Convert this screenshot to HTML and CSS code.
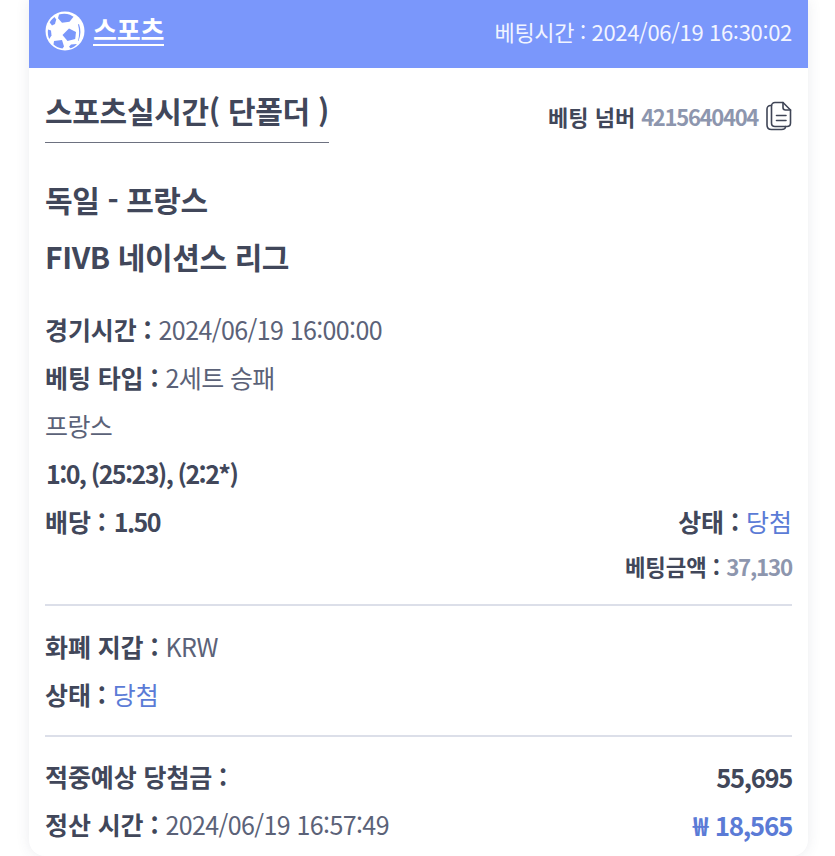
FILE: index.html
```html
<!DOCTYPE html>
<html lang="ko">
<head>
  <meta charset="UTF-8">
  <title>베팅 상세</title>
  <link rel="stylesheet" href="styles.css">
</head>
<body>
  <div class="card">
    <div class="card-head">
      <div class="sport">
        <svg class="ball" viewBox="0 0 40 40" width="40" height="40">
          <circle cx="20" cy="20" r="19.500" fill="#fff"/>
          <g fill="#7a97fb">
            <path d="M14 3.500c3.500-1 7.500-1 11 .2l3.500 2-4 5-7.500 1-4-4.500z"/>
            <path d="M9.500 6c-2 1.500-3.500 3-4.800 5.500l2.300 3 3-1.500 1.200-4.500z"/>
            <path d="M24 17.500l7 3.500-.8 7-7.700 2-5-6z"/>
            <path d="M3 18.500c-.5 3.500 0 6.500 1.200 9.500l2.300-3.500-.5-5z"/>
            <path d="M9 30l8-1 2 6.500-1.500 2c-3.500-.4-6.500-1.700-9-4z"/>
            <path d="M34 13c2 5.500 2 11-.5 17l-.5 0c1.500-6 1.500-11 0-16.500z"/>
            <path d="M26 33.500l6-.5c-1.500 2-3.500 3.200-6.500 4.300l-1.500-1.500z"/>
          </g>
        </svg>
        <span class="sport-name">스포츠</span>
      </div>
      <div class="bet-time">베팅시간 : 2024/06/19 16:30:02</div>
    </div>

    <div class="card-body">
      <div class="title-row">
        <h2 class="bet-title">스포츠실시간( 단폴더 )</h2>
        <div class="bet-no">
          <b>베팅 넘버</b>
          <span class="muted">4215640404</span>
          <svg class="copy" viewBox="0 0 26 30" width="26" height="30" fill="none" stroke="#3f4556" stroke-width="1.600" stroke-linejoin="round" stroke-linecap="round">
            <path d="M5.500 4.500H4.500C2.500 4.500 1 6 1 8v16c0 2.500 1.500 4.500 4.500 4.500h10c2.500 0 4-1.300 4-3"/>
            <path d="M5.500 5C5.500 3 7 1.500 9 1.500h8l7.500 7.500v13c0 2-1.500 3.500-3.500 3.500H9c-2 0-3.500-1.500-3.500-3.500z"/>
            <path d="M17 1.500V6.500c0 1.500 1 2.500 2.500 2.500h5"/>
            <path d="M10.500 14.500h9.500M10.500 19.500h9.500"/>
          </svg>
        </div>
      </div>

      <div class="match">
        <div class="match-line">독일 - 프랑스</div>
        <div class="match-line">FIVB 네이션스 리그</div>
      </div>

      <div class="rows">
        <div class="row"><span><b>경기시간 :</b> <span class="val">2024/06/19 16:00:00</span></span></div>
        <div class="row"><span><b>베팅 타입 :</b> <span class="val">2세트 승패</span></span></div>
        <div class="row"><span class="val">프랑스</span></div>
        <div class="row"><span class="num">1:0, (25:23), (2:2*)</span></div>
        <div class="row">
          <span><b>배당 :</b> <span class="num">1.50</span></span>
          <span><b>상태 :</b> <span class="blue">당첨</span></span>
        </div>
        <div class="row row-small">
          <span></span>
          <span><b>베팅금액 :</b> <span class="muted">37,130</span></span>
        </div>
      </div>

      <div class="rows section">
        <div class="row"><span><b>화폐 지갑 :</b> <span class="val">KRW</span></span></div>
        <div class="row"><span><b>상태 :</b> <span class="blue">당첨</span></span></div>
      </div>

      <div class="rows section last">
        <div class="row">
          <b>적중예상 당첨금 :</b>
          <span class="amount">55,695</span>
        </div>
        <div class="row">
          <span><b>정산 시간 :</b> <span class="val">2024/06/19 16:57:49</span></span>
          <span class="amount blue">₩ 18,565</span>
        </div>
      </div>
    </div>
  </div>
</body>
</html>
```

FILE: styles.css
```css
html,
body {
  margin: 0;
  height: 856px;
  overflow: hidden;
  background: #fff;
}

body {
  font-family: "Noto Sans CJK KR", "Noto Sans", sans-serif;
  color: #41475a;
}

.card {
  width: 779px;
  height: 856px;
  margin-left: 29px;
  border-radius: 0 0 16px 16px;
  box-shadow: 0 0 14px rgba(60, 70, 100, 0.1);
  overflow: hidden;
  background: #fff;
}

.card-head {
  height: 68px;
  padding: 0 16px 6px;
  background: #7a97fb;
  color: #fff;
  display: flex;
  align-items: center;
  justify-content: space-between;
  box-sizing: border-box;
}

.sport {
  display: flex;
  align-items: center;
  gap: 8px;
}

.sport-name {
  font-size: 26px;
  font-weight: 700;
  line-height: 30px;
  letter-spacing: -0.2px;
  border-bottom: 2px solid #fff;
  margin-top: -2px;
}

.bet-time {
  font-size: 22px;
  letter-spacing: -0.33px;
  color: #f1f4ff;
}

.card-body {
  padding: 0 16px;
}

.title-row {
  display: flex;
  justify-content: space-between;
  align-items: flex-start;
  height: 75px;
}

.bet-title {
  margin: 0;
  padding-top: 10px;
  font-size: 30px;
  font-weight: 700;
  line-height: 64px;
  letter-spacing: -0.3px;
  border-bottom: 1px solid #6d7180;
}

.bet-no {
  display: flex;
  align-items: center;
  gap: 6px;
  margin-top: 32px;
  font-size: 22px;
}

.bet-no .muted {
  letter-spacing: -1.300px;
  margin-right: 2px;
}

.muted {
  color: #8d96ae;
  font-weight: 700;
}

.match {
  margin-top: 28px;
}

.match-line {
  font-size: 30px;
  font-weight: 700;
  line-height: 57px;
  letter-spacing: -0.4px;
}

.rows {
  margin-top: 20px;
}

.row {
  display: flex;
  justify-content: space-between;
  align-items: center;
  height: 48px;
  font-size: 25px;
}

.row b {
  letter-spacing: -0.1px;
}

.row-small {
  height: 42px;
  font-size: 22.300px;
}

.row-small .muted {
  letter-spacing: -1.200px;
}

.val {
  color: #5b6278;
  letter-spacing: -0.6px;
}

.num {
  font-weight: 700;
  letter-spacing: -1.600px;
  margin-left: 1px;
}

.blue {
  color: #5b7bd6;
}

.section {
  margin-top: 17px;
  padding-top: 16px;
  border-top: 2px solid #dcdfe9;
}

.last {
  margin-top: 17px;
  padding-top: 15px;
}

.amount {
  font-size: 25.500px;
  font-weight: 700;
  letter-spacing: -1.300px;
}

.amount.blue {
  font-size: 26px;
  word-spacing: 3px;
}
```
